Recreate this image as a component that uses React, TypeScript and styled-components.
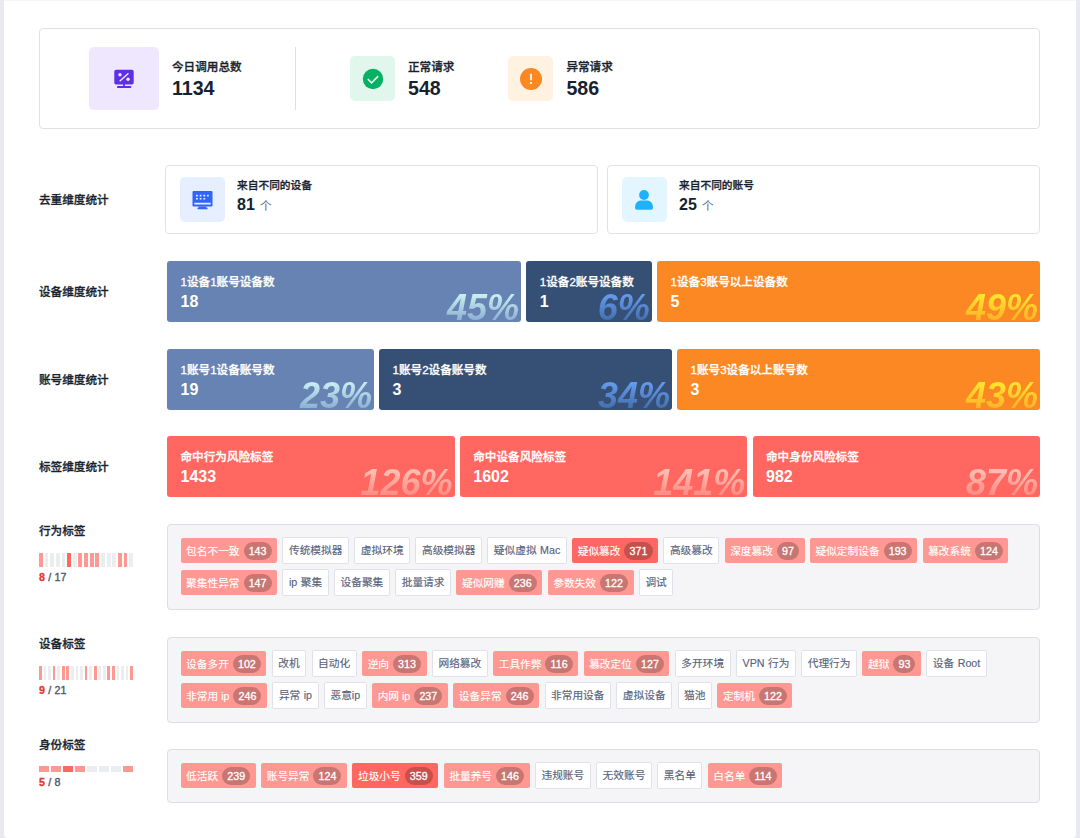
import React from 'react';
import styled, { createGlobalStyle } from 'styled-components';

const GlobalStyle = createGlobalStyle`
  * {
    box-sizing: border-box;
  }

  body {
    margin: 0;
    background: #e8eaef;
    font-family: 'Liberation Sans', 'Noto Sans CJK SC', sans-serif;
    color: #181f2e;
  }
`;

const Page = styled.div`
  width: 1072px;
  height: 838px;
  margin: 0 auto;
  padding: 28px 36px 0 35px;
  background: #fff;
  border-top: 1px solid #f6f6f8;
  border-radius: 0 0 4px 4px;
  overflow: hidden;
`;

const Summary = styled.section`
  display: flex;
  align-items: center;
  height: 101px;
  margin-top: -1px;
  padding-left: 49px;
  border: 1px solid #dfe1e6;
  border-radius: 4px;
`;

const Stat = styled.div<{ $width?: number }>`
  display: flex;
  align-items: center;
  gap: 13px;
  width: ${(p) => (p.$width ? `${p.$width}px` : 'auto')};
`;

const Divider = styled.div`
  width: 1px;
  height: 63px;
  margin-right: 54px;
  background: #dcdfe6;
`;

const IconBox = styled.div<{ $bg: string; $large?: boolean }>`
  display: flex;
  align-items: center;
  justify-content: center;
  flex: none;
  width: ${(p) => (p.$large ? 70 : 45)}px;
  height: ${(p) => (p.$large ? 63 : 45)}px;
  border-radius: 5px;
  background: ${(p) => p.$bg};
`;

const StatTitle = styled.div<{ $small?: boolean }>`
  font-size: ${(p) => (p.$small ? 10.7 : 11.6)}px;
  line-height: 18px;
  font-weight: 500;
  white-space: nowrap;
  -webkit-text-stroke: 0.3px currentColor;
`;

const StatValue = styled.div<{ $small?: boolean }>`
  margin-top: ${(p) => (p.$small ? 1 : 0)}px;
  font-size: ${(p) => (p.$small ? 16 : 19.6)}px;
  line-height: ${(p) => (p.$small ? 20 : 24)}px;
  font-weight: 700;
`;

const Unit = styled.span`
  margin-left: 5px;
  font-size: 11.6px;
  font-weight: 400;
  color: #58627a;
`;

const Row = styled.section<{ $gap: number }>`
  display: flex;
  align-items: flex-start;
  margin-top: ${(p) => p.$gap}px;
`;

const RowLabel = styled.h3<{ $height: number; $wide?: boolean }>`
  flex: none;
  width: ${(p) => (p.$wide ? 126 : 128)}px;
  margin: 0;
  font-size: 11.6px;
  line-height: ${(p) => p.$height}px;
  font-weight: 500;
  -webkit-text-stroke: 0.3px currentColor;
`;

const OriginList = styled.div`
  display: flex;
  flex: 1;
  gap: 9px;
`;

const OriginCard = styled.div`
  display: flex;
  flex: 1;
  gap: 12.5px;
  height: 69px;
  padding: 11px 13.6px;
  border: 1px solid #dfe2e9;
  border-radius: 4px;
`;

const OriginText = styled.div`
  margin-top: -1px;
`;

const CardList = styled.div<{ $columns: string }>`
  display: grid;
  flex: 1;
  grid-template-columns: ${(p) => p.$columns};
  justify-content: space-between;
`;

const Card = styled.div<{ $bg: string }>`
  position: relative;
  height: 61px;
  padding: 12px 13.5px;
  border-radius: 3px;
  background: ${(p) => p.$bg};
  color: #fff;
`;

const Percent = styled.div<{ $from: string; $to: string }>`
  position: absolute;
  right: 0;
  bottom: 0;
  padding: 2px 2px 1px;
  font-size: 36px;
  line-height: 27px;
  font-weight: 700;
  font-style: italic;
  background: linear-gradient(${(p) => p.$from} 10%, ${(p) => p.$to});
  -webkit-background-clip: text;
  background-clip: text;
  color: transparent;
`;

const TagLabel = styled.div<{ $shift: number }>`
  flex: none;
  width: 128px;
  margin-top: ${(p) => p.$shift}px;
`;

const TagTitle = styled.h3<{ $gap: number }>`
  margin: 0 0 ${(p) => p.$gap}px;
  font-size: 11.6px;
  line-height: 16px;
  font-weight: 500;
  -webkit-text-stroke: 0.3px currentColor;
`;

const Bars = styled.div<{ $height: number }>`
  display: flex;
  gap: 1.8px;
  width: 94px;
  height: ${(p) => p.$height}px;
`;

const barColors = { none: '#ebeef1', hit: '#ff9893', high: '#ff6760' };

const Bar = styled.span<{ $level: Level }>`
  flex: 1;
  background: ${(p) => barColors[p.$level]};
`;

const Count = styled.div`
  margin-top: 1.5px;
  font-size: 10.7px;
  line-height: 16px;
  color: #4b566b;
  word-spacing: 0.3px;
  -webkit-text-stroke: 0.35px currentColor;

  em {
    color: #e23c39;
    font-style: normal;
    font-weight: 700;
  }
`;

const TagBox = styled.div<{ $height: number }>`
  display: flex;
  flex: 1;
  flex-wrap: wrap;
  align-content: flex-start;
  align-items: center;
  gap: 5.4px;
  height: ${(p) => p.$height}px;
  padding: 12px 12.5px;
  border: 1px solid #dcdee5;
  border-radius: 4px;
  background: #f5f5f8;
`;

const PlainTag = styled.span`
  height: 27px;
  padding: 0 5.5px;
  border: 1px solid #dfe2e8;
  border-radius: 2px;
  background: #fff;
  font-size: 10.7px;
  line-height: 24px;
  color: #58627a;
  white-space: nowrap;
  word-spacing: 0.5px;
  -webkit-text-stroke: 0.15px currentColor;
`;

const HitTag = styled.span<{ $level: Level }>`
  display: flex;
  align-items: center;
  gap: 4px;
  height: 25px;
  padding: 0 5.5px 0 5.6px;
  border-radius: 2px;
  background: ${(p) => barColors[p.$level]};
  font-size: 10.7px;
  line-height: 24px;
  color: #fff;
  white-space: nowrap;
  -webkit-text-stroke: 0.12px currentColor;
`;

const Pill = styled.span`
  height: 18px;
  padding: 0 5.1px;
  border-radius: 9px;
  background: rgba(0, 0, 0, 0.22);
  line-height: 18px;
  -webkit-text-stroke: 0.3px currentColor;
`;

type Level = 'none' | 'hit' | 'high';
type Tag = [name: string, hits?: number];

const getLevel = (hits?: number): Level => {
  if (!hits) return 'none';
  return hits > 350 ? 'high' : 'hit';
};

const BLUE = { bg: '#6683b3', from: '#c8eef2', to: '#88acd0' };
const NAVY = { bg: '#364f75', from: '#649bee', to: '#426ca8' };
const ORANGE = { bg: '#fb8822', from: '#ffe82e', to: '#ffad28' };
const RED = { bg: '#ff6760', from: '#ffc0b4', to: '#ff8780' };

const cardRows = [
  {
    label: '设备维度统计',
    gap: 27,
    columns: '354px 125.5px 383px',
    cards: [
      { title: '1设备1账号设备数', value: 18, percent: 45, theme: BLUE },
      { title: '1设备2账号设备数', value: 1, percent: 6, theme: NAVY },
      { title: '1设备3账号以上设备数', value: 5, percent: 49, theme: ORANGE },
    ],
  },
  {
    label: '账号维度统计',
    gap: 27,
    columns: '207px 293px 363px',
    cards: [
      { title: '1账号1设备账号数', value: 19, percent: 23, theme: BLUE },
      { title: '1账号2设备账号数', value: 3, percent: 34, theme: NAVY },
      { title: '1账号3设备以上账号数', value: 3, percent: 43, theme: ORANGE },
    ],
  },
  {
    label: '标签维度统计',
    gap: 26,
    columns: '287.5px 287.5px 287.5px',
    cards: [
      { title: '命中行为风险标签', value: 1433, percent: 126, theme: RED },
      { title: '命中设备风险标签', value: 1602, percent: 141, theme: RED },
      { title: '命中身份风险标签', value: 982, percent: 87, theme: RED },
    ],
  },
];

type TagRow = {
  label: string;
  gap: number;
  height: number;
  shift: number;
  titleGap: number;
  bar: number;
  tags: Tag[];
};

const tagRows: TagRow[] = [
  {
    label: '行为标签',
    gap: 27,
    height: 86,
    shift: -1,
    titleGap: 14,
    bar: 14,
    tags: [
      ['包名不一致', 143], ['传统模拟器'], ['虚拟环境'], ['高级模拟器'], ['疑似虚拟 Mac'],
      ['疑似篡改', 371], ['高级篡改'], ['深度篡改', 97], ['疑似定制设备', 193], ['篡改系统', 124],
      ['聚集性异常', 147], ['ip 聚集'], ['设备聚集'], ['批量请求'], ['疑似网赚', 236],
      ['参数失效', 122], ['调试'],
    ],
  },
  {
    label: '设备标签',
    gap: 27,
    height: 86,
    shift: -1,
    titleGap: 14,
    bar: 14,
    tags: [
      ['设备多开', 102], ['改机'], ['自动化'], ['逆向', 313], ['网络篡改'], ['工具作弊', 116],
      ['篡改定位', 127], ['多开环境'], ['VPN 行为'], ['代理行为'], ['越狱', 93], ['设备 Root'],
      ['非常用 ip', 246], ['异常 ip'], ['恶意ip'], ['内网 ip', 237], ['设备异常', 246],
      ['非常用设备'], ['虚拟设备'], ['猫池'], ['定制机', 122],
    ],
  },
  {
    label: '身份标签',
    gap: 26,
    height: 54,
    shift: -12,
    titleGap: 13,
    bar: 6,
    tags: [
      ['低活跃', 239], ['账号异常', 124], ['垃圾小号', 359], ['批量养号', 146],
      ['违规账号'], ['无效账号'], ['黑名单'], ['白名单', 114],
    ],
  },
];

const CallsIcon = () => (
  <svg width="20" height="20" viewBox="0 0 20 20" fill="none">
    <rect x="0.3" y="0.8" width="19.4" height="14.8" rx="1.8" fill="#5f2eea" />
    <path d="M10 15v3M3.8 18h12.6" stroke="#5f2eea" strokeWidth="1.8" strokeLinecap="round" />
    <path d="M6.2 11.8l7.8-7" stroke="#efe7fe" strokeWidth="1.5" strokeLinecap="round" />
    <circle cx="6" cy="5.8" r="1.7" fill="#efe7fe" />
    <circle cx="14" cy="10.2" r="1.7" fill="#efe7fe" />
  </svg>
);

const NormalIcon = () => (
  <svg width="22" height="22" viewBox="0 0 22 22" fill="none">
    <circle cx="11" cy="11" r="10.2" fill="#06b163" />
    <path d="M5.8 11l3.8 3.8 6.6-6.7" stroke="#e1f6ec" strokeWidth="1.6" />
  </svg>
);

const AbnormalIcon = () => (
  <svg width="22" height="22" viewBox="0 0 22 22" fill="none">
    <circle cx="11" cy="11" r="11" fill="#fb8822" />
    <path d="M11 5.7v6.6M11 14v2.1" stroke="#fff2e0" strokeWidth="2.1" />
  </svg>
);

const DeviceIcon = () => (
  <svg width="21" height="20" viewBox="0 0 21 20" fill="none">
    <rect x="0.5" y="0.9" width="20" height="15.6" rx="1.2" fill="#2f65fb" />
    <path d="M2.3 13.6h16.4" stroke="#e6efff" strokeWidth="1.6" />
    <path d="M6.5 16.5h8v1.2h1v1.6h-10v-1.6h1z" fill="#2f65fb" />
    <path d="M4 5.6h12.8M4 8.8h9.6" stroke="#e6efff" strokeWidth="1.6" strokeDasharray="1.8 1.9" />
  </svg>
);

const AccountIcon = () => (
  <svg width="20" height="22" viewBox="0 0 20 22" fill="#1fb2fb">
    <circle cx="10" cy="6" r="4.9" />
    <path d="M1 18.8c0-4.6 2.6-7.4 5.6-7.4h6.8c3 0 5.6 2.8 5.6 7.4 0 1.3-.7 2-2 2H3c-1.3 0-2-.7-2-2z" />
  </svg>
);

const App: React.FC = () => {
  return (
    <Page>
      <GlobalStyle />
      <Summary>
        <Stat $width={206}>
          <IconBox $bg="#efe7fe" $large><CallsIcon /></IconBox>
          <div>
            <StatTitle>今日调用总数</StatTitle>
            <StatValue>1134</StatValue>
          </div>
        </Stat>
        <Divider />
        <Stat $width={158.4}>
          <IconBox $bg="#e1f6ec"><NormalIcon /></IconBox>
          <div>
            <StatTitle>正常请求</StatTitle>
            <StatValue>548</StatValue>
          </div>
        </Stat>
        <Stat>
          <IconBox $bg="#fff2e0"><AbnormalIcon /></IconBox>
          <div>
            <StatTitle>异常请求</StatTitle>
            <StatValue>586</StatValue>
          </div>
        </Stat>
      </Summary>

      <Row $gap={36}>
        <RowLabel $height={69} $wide>去重维度统计</RowLabel>
        <OriginList>
          <OriginCard>
            <IconBox $bg="#e6efff"><DeviceIcon /></IconBox>
            <OriginText>
              <StatTitle $small>来自不同的设备</StatTitle>
              <StatValue $small>81<Unit>个</Unit></StatValue>
            </OriginText>
          </OriginCard>
          <OriginCard>
            <IconBox $bg="#e3f6ff"><AccountIcon /></IconBox>
            <OriginText>
              <StatTitle $small>来自不同的账号</StatTitle>
              <StatValue $small>25<Unit>个</Unit></StatValue>
            </OriginText>
          </OriginCard>
        </OriginList>
      </Row>

      {cardRows.map((row) => (
        <Row key={row.label} $gap={row.gap}>
          <RowLabel $height={61}>{row.label}</RowLabel>
          <CardList $columns={row.columns}>
            {row.cards.map((card) => (
              <Card key={card.title} $bg={card.theme.bg}>
                <StatTitle>{card.title}</StatTitle>
                <StatValue $small>{card.value}</StatValue>
                <Percent $from={card.theme.from} $to={card.theme.to}>{card.percent}%</Percent>
              </Card>
            ))}
          </CardList>
        </Row>
      ))}

      {tagRows.map((row) => (
        <Row key={row.label} $gap={row.gap}>
          <TagLabel $shift={row.shift}>
            <TagTitle $gap={row.titleGap}>{row.label}</TagTitle>
            <Bars $height={row.bar}>
              {row.tags.map(([name, hits]) => (
                <Bar key={name} $level={getLevel(hits)} />
              ))}
            </Bars>
            <Count>
              <em>{row.tags.filter(([, hits]) => hits).length}</em> / {row.tags.length}
            </Count>
          </TagLabel>
          <TagBox $height={row.height}>
            {row.tags.map(([name, hits]) =>
              hits ? (
                <HitTag key={name} $level={getLevel(hits)}>
                  {name}
                  <Pill>{hits}</Pill>
                </HitTag>
              ) : (
                <PlainTag key={name}>{name}</PlainTag>
              )
            )}
          </TagBox>
        </Row>
      ))}
    </Page>
  );
};

export default App;
